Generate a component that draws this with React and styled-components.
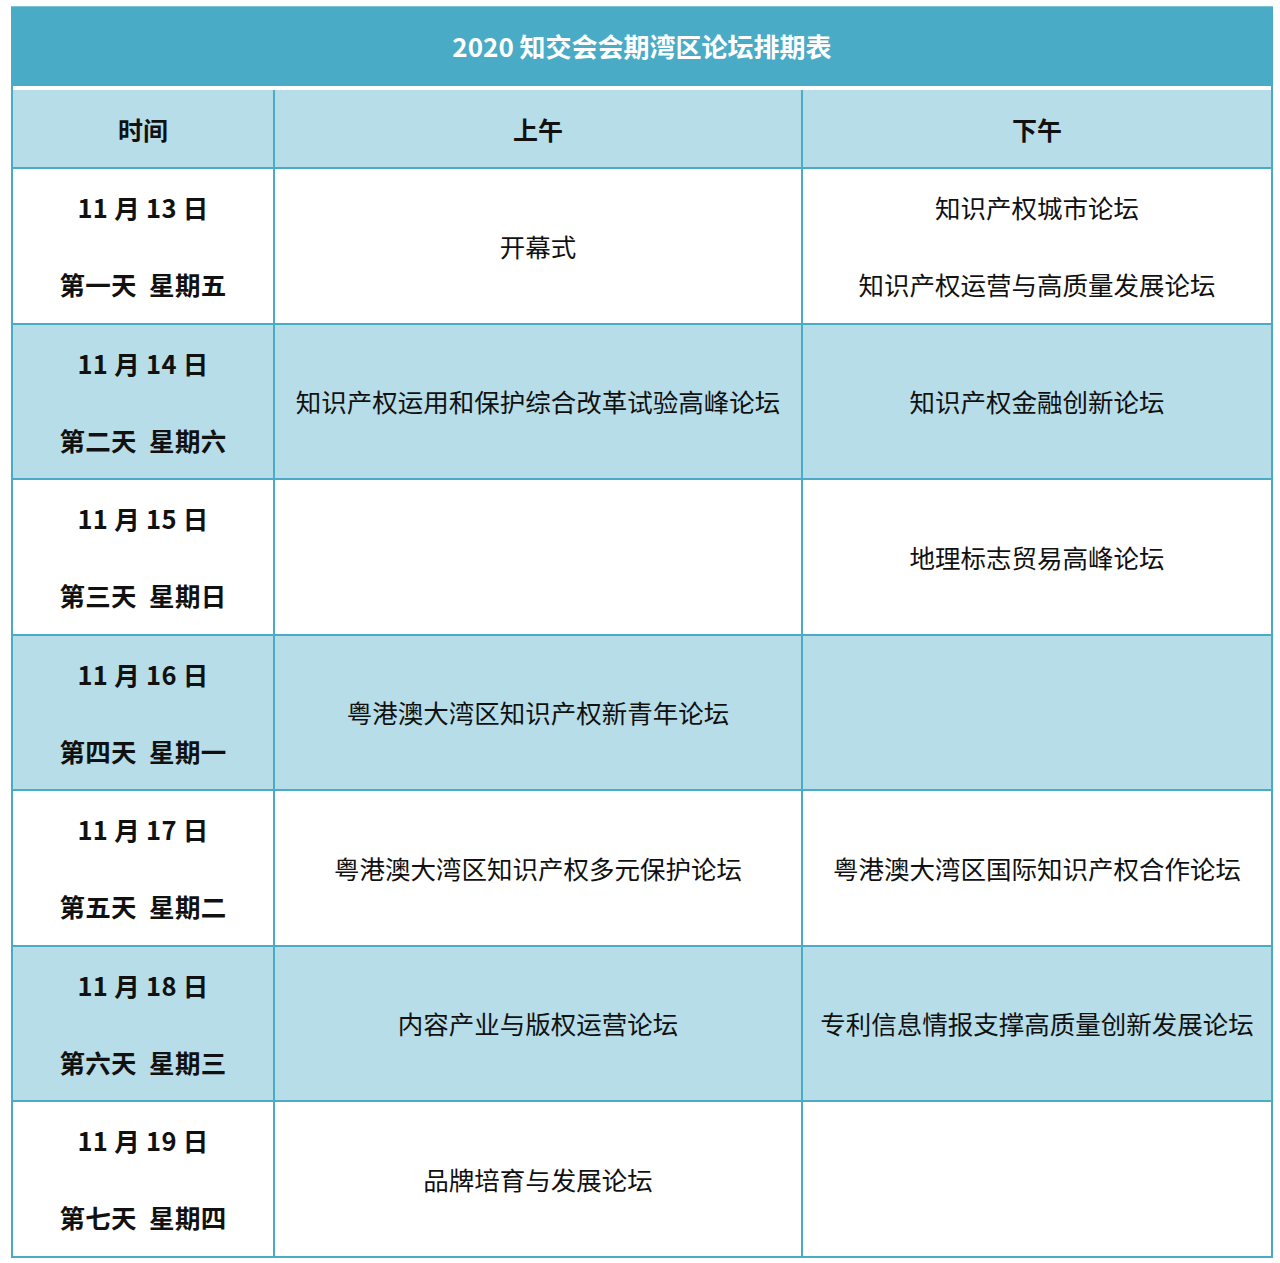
import React from "react";
import styled, { createGlobalStyle } from "styled-components";

const schedule = [
  { date: "11 月 13 日", day: "第一天  星期五", am: ["开幕式"], pm: ["知识产权城市论坛", "知识产权运营与高质量发展论坛"] },
  { date: "11 月 14 日", day: "第二天  星期六", am: ["知识产权运用和保护综合改革试验高峰论坛"], pm: ["知识产权金融创新论坛"] },
  { date: "11 月 15 日", day: "第三天  星期日", am: [], pm: ["地理标志贸易高峰论坛"] },
  { date: "11 月 16 日", day: "第四天  星期一", am: ["粤港澳大湾区知识产权新青年论坛"], pm: [] },
  { date: "11 月 17 日", day: "第五天  星期二", am: ["粤港澳大湾区知识产权多元保护论坛"], pm: ["粤港澳大湾区国际知识产权合作论坛"] },
  { date: "11 月 18 日", day: "第六天  星期三", am: ["内容产业与版权运营论坛"], pm: ["专利信息情报支撑高质量创新发展论坛"] },
  { date: "11 月 19 日", day: "第七天  星期四", am: ["品牌培育与发展论坛"], pm: [] },
];

const GlobalStyle = createGlobalStyle`
  html, body {
    margin: 0;
    padding: 0;
    background: #ffffff;
  }
  body {
    font-family: "Noto Sans CJK SC", "Open Sans", sans-serif;
    color: #111;
  }
`;

const Page = styled.div`
  padding: 6px 0 0 11px;
`;

const Sheet = styled.div`
  width: 1262px;
  box-sizing: border-box;
  border-left: 2px solid #4aabc6;
  border-right: 2px solid #4aabc6;
`;

const TitleBar = styled.div`
  height: 80px;
  margin: 0 -2px;
  box-sizing: border-box;
  border-top: 1px solid #7cc3d6;
  background: #4aabc6;
  color: #ffffff;
  font-size: 26px;
  font-weight: 700;
  display: flex;
  align-items: center;
  justify-content: center;
  padding-bottom: 2px;
`;

const Gap = styled.div`
  height: 4px;
  background: #ffffff;
`;

const Table = styled.table`
  width: 1258px;
  border-collapse: collapse;
  table-layout: fixed;
`;

const HeadCell = styled.th`
  height: 77px;
  padding: 0;
  background: #b7dde8;
  border-bottom: 2px solid #4aabc6;
  border-left: 2px solid #4aabc6;
  font-size: 25px;
  font-weight: 700;
  text-align: center;
  color: #111;
  &:first-child {
    border-left: none;
  }
`;

const Row = styled.tr`
  background: ${(p) => (p.$shaded ? "#b7dde8" : "#ffffff")};
`;

const Cell = styled.td`
  height: 153.5px;
  padding: 0;
  border-bottom: 2px solid #4aabc6;
  border-left: 2px solid #4aabc6;
  text-align: center;
  vertical-align: middle;
  &:first-child {
    border-left: none;
  }
`;

const Lines = styled.div`
  display: flex;
  flex-direction: column;
  align-items: center;
  justify-content: center;
  gap: 41px;
  font-size: 25.5px;
  line-height: 36px;
  font-weight: ${(p) => (p.$bold ? 700 : 400)};
  letter-spacing: ${(p) => (p.$bold ? "0.3px" : "0")};
  white-space: pre;
`;

export default function App() {
  return (
    <>
      <GlobalStyle />
      <Page>
        <Sheet>
          <TitleBar>2020 知交会会期湾区论坛排期表</TitleBar>
          <Gap />
          <Table>
            <colgroup>
              <col style={{ width: 261 }} />
              <col style={{ width: 528 }} />
              <col />
            </colgroup>
            <thead>
              <tr>
                <HeadCell>时间</HeadCell>
                <HeadCell>上午</HeadCell>
                <HeadCell>下午</HeadCell>
              </tr>
            </thead>
            <tbody>
              {schedule.map((item, i) => (
                <Row key={item.date} $shaded={i % 2 === 1}>
                  <Cell>
                    <Lines $bold>
                      <span>{item.date}</span>
                      <span>{item.day}</span>
                    </Lines>
                  </Cell>
                  <Cell>
                    <Lines>
                      {item.am.map((t) => (
                        <span key={t}>{t}</span>
                      ))}
                    </Lines>
                  </Cell>
                  <Cell>
                    <Lines>
                      {item.pm.map((t) => (
                        <span key={t}>{t}</span>
                      ))}
                    </Lines>
                  </Cell>
                </Row>
              ))}
            </tbody>
          </Table>
        </Sheet>
      </Page>
    </>
  );
}
